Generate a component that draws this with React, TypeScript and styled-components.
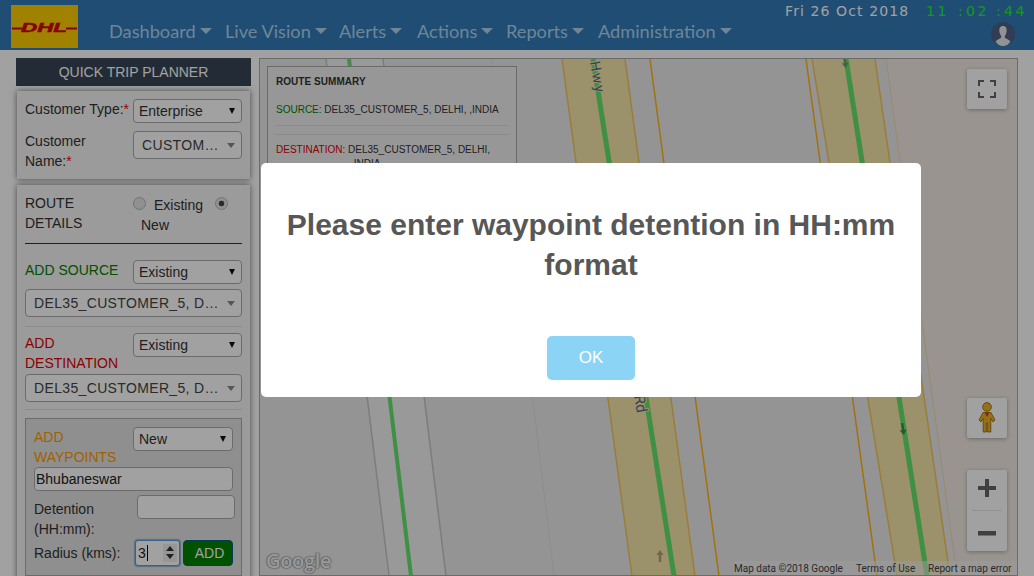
import React from "react";
import styled, { createGlobalStyle } from "styled-components";

const Global = createGlobalStyle`
  html, body { margin: 0; padding: 0; height: 576px; overflow: hidden; background: #fff; }
  body { font-family: "Liberation Sans", Arial, sans-serif; font-size: 14px; color: #333; }
  * { box-sizing: border-box; }
`;

const Page = styled.div`
  position: relative;
  width: 1034px;
  height: 576px;
  overflow: hidden;
`;

const Navbar = styled.header`
  display: flex;
  height: 50px;
  background: #337ab7;
`;

const LogoBox = styled.div`
  width: 67px;
  height: 43px;
  margin: 5px 0 0 11px;
  background: #ffcc00;
`;

const Menu = styled.nav`
  display: flex;
  align-items: center;
  margin: 13px 0 0 31px;
  height: 36px;
`;

const MenuItem = styled.div<{ $w: number }>`
  display: flex;
  align-items: center;
  width: ${(p) => p.$w}px;
  font-family: Lato, sans-serif;
  font-size: 18.2px;
  color: #aed4ee;
  &::after {
    content: "";
    margin-left: 4px;
    border-left: 6px solid transparent;
    border-right: 6px solid transparent;
    border-top: 6px solid #aed4ee;
  }
`;

const DateLine = styled.div`
  position: absolute;
  top: 2px;
  left: 785px;
  display: flex;
  font-family: "DejaVu Sans", sans-serif;
  font-size: 14px;
  line-height: 18px;
  white-space: nowrap;
`;

const DateText = styled.span`
  width: 141px;
  color: #fff;
  letter-spacing: 1.1px;
`;

const ClockPart = styled.span<{ $w: number }>`
  width: ${(p) => p.$w}px;
  color: #20f030;
  letter-spacing: 2.5px;
`;

const AvatarWrap = styled.div`
  position: absolute;
  left: 991px;
  top: 22px;
  width: 24px;
  height: 24px;
`;

const Main = styled.main`
  display: flex;
  padding-top: 8px;
  height: 526px;
  background: #fff;
`;

const Sidebar = styled.aside`
  width: 259px;
  flex: none;
  padding-left: 16px;
`;

const TitleBar = styled.div`
  width: 235px;
  height: 28px;
  background: #384756;
  color: #fff;
  font-size: 14px;
  line-height: 28px;
  text-align: center;
`;

const Card = styled.section<{ $mt: number }>`
  width: 233px;
  margin: ${(p) => p.$mt}px 0 0 1px;
  padding: 8px 8px 8px;
  background: #f5f5f5;
  box-shadow: 0 0 6px rgba(0, 0, 0, 0.55);
`;

const Row = styled.div<{ $mt?: number; $cols?: string }>`
  display: grid;
  grid-template-columns: ${(p) => p.$cols || "108px 109px"};
  margin-top: ${(p) => p.$mt || 0}px;
  align-items: start;
`;

const Label = styled.div<{ $color?: string; $pt?: number }>`
  padding-top: ${(p) => p.$pt || 0}px;
  font-size: 14px;
  line-height: 20px;
  color: ${(p) => p.$color || "#333"};
`;

const Star = styled.span`
  color: #ff0000;
`;

const SelectBox = styled.div`
  position: relative;
  height: 24px;
  padding-left: 5px;
  background: #fff;
  border: 1px solid #aaa;
  border-radius: 4px;
  font-size: 14px;
  line-height: 23px;
  color: #333;
  &::after {
    content: "";
    position: absolute;
    right: 6px;
    top: 8px;
    border-left: 3px solid transparent;
    border-right: 3px solid transparent;
    border-top: 6px solid #111;
  }
`;

const Combo = styled.div<{ $mt?: number }>`
  position: relative;
  height: 28px;
  margin-top: ${(p) => p.$mt || 0}px;
  padding: 0 0 0 8px;
  background: #fff;
  border: 1px solid #aaa;
  border-radius: 4px;
  font-size: 14px;
  line-height: 27px;
  letter-spacing: 0.35px;
  white-space: nowrap;
  color: #444;
  &::after {
    content: "";
    position: absolute;
    right: 6px;
    top: 11px;
    border-left: 4px solid transparent;
    border-right: 4px solid transparent;
    border-top: 5px solid #888;
  }
`;

const RadioGrid = styled.div`
  display: grid;
  grid-template-columns: 21px 61px 20px;
  align-items: start;
  padding-top: 2px;
`;

const Radio = styled.span<{ $on?: boolean }>`
  display: block;
  width: 13px;
  height: 13px;
  margin-top: 2px;
  border: 1px solid #b5b5b5;
  border-radius: 50%;
  background: ${(p) => (p.$on ? "radial-gradient(circle, #444 0 2.5px, #e4e4e4 3.2px)" : "#e4e4e4")};
`;

const NewLabel = styled.div`
  grid-column: 1 / 4;
  margin-left: 8px;
  line-height: 20px;
`;

const RadioText = styled.span`
  line-height: 20px;
`;

const Rule = styled.hr<{ $strong?: boolean; $mt: number; $mb: number }>`
  margin: ${(p) => p.$mt}px 0 ${(p) => p.$mb}px;
  border: 0;
  border-top: 1px solid ${(p) => (p.$strong ? "#333" : "#ddd")};
`;

const WaypointBox = styled.div`
  margin-top: 8px;
  height: 158px;
  padding: 8px;
  background: #e3e3e3;
  border: 1px solid #aaa;
`;

const TextField = styled.div`
  height: 24px;
  padding-left: 1px;
  background: #fff;
  border: 1px solid #aaa;
  border-radius: 4px;
  font-size: 14px;
  line-height: 23px;
  color: #222;
`;

const NumberField = styled.div`
  position: relative;
  display: flex;
  align-items: center;
  width: 45px;
  height: 26px;
  padding-left: 2px;
  background: #fff;
  border: 1px solid #5b9bd5;
  box-shadow: 0 0 1px 1px rgba(91, 155, 213, 0.7);
  border-radius: 3px;
  font-size: 14px;
  color: #222;
`;

const Caret = styled.span`
  width: 1px;
  height: 16px;
  margin-left: 1px;
  background: #000;
`;

const Spinner = styled.span`
  position: absolute;
  right: 2px;
  top: 3px;
  width: 14px;
  height: 18px;
  background: #eee;
  &::before {
    content: "";
    position: absolute;
    left: 3px;
    top: 2px;
    border-left: 4px solid transparent;
    border-right: 4px solid transparent;
    border-bottom: 5px solid #333;
  }
  &::after {
    content: "";
    position: absolute;
    left: 3px;
    top: 10px;
    border-left: 4px solid transparent;
    border-right: 4px solid transparent;
    border-top: 5px solid #333;
  }
`;

const AddButton = styled.button`
  width: 50px;
  height: 26px;
  margin-left: 3px;
  padding: 0 0 0 3px;
  background: #008000;
  border: 1px solid #0a5f8a;
  border-radius: 4px;
  font-family: inherit;
  font-size: 14px;
  color: #fff;
`;

const MapArea = styled.section`
  position: relative;
  width: 759px;
  height: 518px;
  border: 1px solid #aaa;
  background: #ebebeb;
  overflow: hidden;
`;

const MapCanvas = styled.svg`
  position: absolute;
  left: 0;
  top: 0;
  width: 757px;
  height: 516px;
`;

const Summary = styled.div`
  position: absolute;
  left: 7px;
  top: 7px;
  width: 250px;
  height: 200px;
  padding: 8px 8px;
  background: #f0f0f0;
  border: 1px solid #aaa;
  font-size: 10px;
  color: #333;
`;

const SummaryTitle = styled.div`
  font-weight: 700;
  line-height: 14px;
  letter-spacing: 0.05px;
  margin-bottom: 14px;
`;

const SummaryLine = styled.div`
  line-height: 14px;
  margin-left: 0;
`;

const Tone = styled.span<{ $c: string }>`
  color: ${(p) => p.$c};
`;

const Indent = styled.div`
  margin-left: 75px;
  line-height: 14px;
`;

const ThinRule = styled.hr<{ $mt: number; $mb: number }>`
  margin: ${(p) => p.$mt}px 0 ${(p) => p.$mb}px;
  border: 0;
  border-top: 1px solid #ddd;
`;

const MapButton = styled.div<{ $top: number; $h?: number }>`
  position: absolute;
  left: 707px;
  top: ${(p) => p.$top}px;
  width: 40px;
  height: ${(p) => p.$h || 40}px;
  display: flex;
  flex-direction: column;
  align-items: center;
  justify-content: center;
  background: #fff;
  border-radius: 2px;
  box-shadow: 0 1px 4px rgba(0, 0, 0, 0.3);
`;

const ZoomStep = styled.div<{ $up?: boolean }>`
  height: 40px;
  width: 100%;
  display: flex;
  align-items: center;
  justify-content: center;
  padding: ${(p) => (p.$up ? "0 0 4px" : "4px 0 0")};
`;

const ZoomDivider = styled.div`
  width: 30px;
  height: 1px;
  background: #e6e6e6;
`;

const GoogleMark = styled.div`
  position: absolute;
  left: 6px;
  bottom: 1px;
  font-family: "Open Sans", sans-serif;
  font-size: 20px;
  font-weight: 600;
  line-height: 26px;
  letter-spacing: -0.3px;
  color: #f4f4f4;
  text-shadow: 0 0 1px #777, 0 0 1px #777, 0 0 2px #777;
`;

const Attribution = styled.div`
  position: absolute;
  right: 0;
  bottom: 0;
  height: 14px;
  display: flex;
  background: rgba(245, 245, 245, 0.55);
  font-family: Roboto, sans-serif;
  font-size: 10px;
  line-height: 15px;
  color: #444;
  white-space: nowrap;
`;

const AttrItem = styled.span<{ $w: number }>`
  width: ${(p) => p.$w}px;
`;

const Overlay = styled.div`
  position: fixed;
  inset: 0;
  background: rgba(0, 0, 0, 0.37);
`;

const Modal = styled.div`
  position: fixed;
  left: 261px;
  top: 163px;
  width: 660px;
  height: 234px;
  padding: 42px 17px 0;
  background: #fff;
  border-radius: 5px;
  text-align: center;
`;

const ModalTitle = styled.h2`
  margin: 0;
  font-size: 30px;
  font-weight: 700;
  line-height: 40px;
  color: #575757;
`;

const ModalOk = styled.button`
  display: block;
  width: 88px;
  height: 44px;
  margin: 51px auto 0;
  padding: 0;
  border: 0;
  border-radius: 5px;
  background: #8cd4f5;
  font-family: inherit;
  font-size: 17px;
  font-weight: 500;
  color: #fff;
`;

const menu: [string, number][] = [
  ["Dashboard", 116],
  ["Live Vision", 114],
  ["Alerts", 78],
  ["Actions", 89],
  ["Reports", 92],
  ["Administration", 150],
];

const Arrow = ({ x, y, fill, rot = 0 }: { x: number; y: number; fill: string; rot?: number }) => (
  <path d="M0 -6 L3.5 -1 L1.2 -1 L1.2 6 L-1.2 6 L-1.2 -1 L-3.5 -1 Z" fill={fill} transform={`translate(${x} ${y}) rotate(${rot})`} />
);

const Roads = () => (
  <MapCanvas viewBox="260 59 757 516">
    <polygon points="886,59 1018,59 1018,576 957,576" fill="#f2ebe5" />
    <polygon points="326,59 383,59 446,576 388,576" fill="#f2f2f2" />
    <path d="M326 59 L389 576 M383 59 L446 576" stroke="#c4c4c0" strokeWidth="1.5" fill="none" />
    <path d="M349 59 L411 576" stroke="#64e36e" strokeWidth="4" fill="none" />
    <path d="M492 59 L554 576" stroke="#dedede" strokeWidth="1" fill="none" />

    <polygon points="562,59 625,59 695,576 632,576" fill="#f5e6aa" />
    <path d="M562 59 L632 576 M625 59 L695 576" stroke="#f3c75c" strokeWidth="1.5" fill="none" />
    <path d="M593 59 L674 576" stroke="#64e36e" strokeWidth="5" fill="none" />
    <path d="M650 59 L719 576" stroke="#ffb518" strokeWidth="1.5" fill="none" />

    <polygon points="812,59 875,59 950,576 897,576" fill="#f5e6aa" />
    <path d="M812 59 L897 576 M875 59 L950 576" stroke="#f3c75c" strokeWidth="1.5" fill="none" />
    <path d="M846 59 L927 576" stroke="#64e36e" strokeWidth="5" fill="none" />
    <path d="M806 59 L877 576" stroke="#ffb518" strokeWidth="1.5" fill="none" />
    <path d="M886 59 L957 576" stroke="#f3d9b0" strokeWidth="1" fill="none" />

    <text x="0" y="0" transform="translate(590 62) rotate(80)" fontFamily="Roboto, sans-serif" fontSize="14" letterSpacing="2" fill="#4f6a85" stroke="#f5e6aa" strokeWidth="2" paintOrder="stroke">Hwy</text>
    <text x="0" y="0" transform="translate(634 396) rotate(80)" fontFamily="Roboto, sans-serif" fontSize="15" fill="#4f6a85" stroke="#f5e6aa" strokeWidth="2" paintOrder="stroke">Rd</text>
    <Arrow x={660} y={556} fill="#b0a078" />
    <Arrow x={903} y={429} fill="#3f9048" rot={172} />
    <Arrow x={845} y={62} fill="#66a070" rot={172} />
  </MapCanvas>
);

const FullscreenIcon = () => (
  <svg width="18" height="18" viewBox="0 0 18 18">
    <path d="M1 6 V1 H6 M12 1 H17 V6 M17 12 V17 H12 M6 17 H1 V12" fill="none" stroke="#666" strokeWidth="2" />
  </svg>
);

const Pegman = () => (
  <svg width="18" height="32" viewBox="0 0 18 32">
    <g stroke="#7a5a10" strokeWidth="0.7" fill="#f0b020">
      <circle cx="9" cy="5" r="4.4" />
      <path d="M5 10.5 H13 L17 18 L15 20 L12.8 16.5 V30 H9.6 V21 H8.4 V30 H5.2 V16.5 L3 20 L1 18 Z" />
    </g>
    <path d="M6.5 10.5 L9 15 L11.5 10.5 Z" fill="#c94a1a" />
  </svg>
);

const PlusIcon = () => (
  <svg width="18" height="18" viewBox="0 0 18 18">
    <path d="M0 7 H7 V0 H11 V7 H18 V11 H11 V18 H7 V11 H0 Z" fill="#666" />
  </svg>
);

const MinusIcon = () => (
  <svg width="18" height="5" viewBox="0 0 18 5">
    <rect width="18" height="4.5" fill="#666" />
  </svg>
);

const DhlLogo = () => (
  <svg width="67" height="43" viewBox="0 0 67 43">
    <path d="M1 23.5 H11 M55 23.5 H66" stroke="#d40511" strokeWidth="2" />
    <text x="10" y="26.5" textLength="46" lengthAdjust="spacingAndGlyphs" fontFamily="Liberation Sans, sans-serif" fontStyle="italic" fontWeight="700" fontSize="12" fill="#d40511" stroke="#d40511" strokeWidth="0.5">DHL</text>
  </svg>
);

const AvatarIcon = () => (
  <svg width="24" height="24" viewBox="0 0 24 24">
    <circle cx="12" cy="12" r="12" fill="#4d6185" />
    <path d="M12 4 C9 4 8 6.5 8.4 9.5 C8.7 11.5 9.5 13 10.2 14 V15.5 C9 17 6 17.5 4.5 19.5 C6.5 22.5 9 24 12 24 C15 24 17.5 22.5 19.5 19.5 C18 17.5 15 17 13.8 15.5 V14 C14.5 13 15.3 11.5 15.6 9.5 C16 6.5 15 4 12 4 Z" fill="#e8e8e8" />
  </svg>
);

export default function App() {
  return (
    <Page>
      <Global />
      <Navbar>
        <LogoBox>
          <DhlLogo />
        </LogoBox>
        <Menu>
          {menu.map(([label, w]) => (
            <MenuItem key={label} $w={w}>
              {label}
            </MenuItem>
          ))}
        </Menu>
      </Navbar>
      <DateLine>
        <DateText>Fri 26 Oct 2018</DateText>
        <ClockPart $w={32}>11</ClockPart>
        <ClockPart $w={8}>:</ClockPart>
        <ClockPart $w={30}>02</ClockPart>
        <ClockPart $w={8}>:</ClockPart>
        <ClockPart $w={24}>44</ClockPart>
      </DateLine>
      <AvatarWrap>
        <AvatarIcon />
      </AvatarWrap>
      <Main>
        <Sidebar>
          <TitleBar>QUICK TRIP PLANNER</TitleBar>
          <Card $mt={5}>
            <Row>
              <Label>
                Customer Type:<Star>*</Star>
              </Label>
              <SelectBox>Enterprise</SelectBox>
            </Row>
            <Row $mt={8}>
              <Label>
                Customer
                <br />
                Name:<Star>*</Star>
              </Label>
              <Combo>CUSTOM…</Combo>
            </Row>
          </Card>
          <Card $mt={6}>
            <Row>
              <Label>
                ROUTE
                <br />
                DETAILS
              </Label>
              <RadioGrid>
                <Radio />
                <RadioText>Existing</RadioText>
                <Radio $on />
                <NewLabel>New</NewLabel>
              </RadioGrid>
            </Row>
            <Rule $strong $mt={8} $mb={16} />
            <Row>
              <Label>
                <Tone $c="#008000">ADD SOURCE</Tone>
              </Label>
              <SelectBox>Existing</SelectBox>
            </Row>
            <Combo $mt={5}>DEL35_CUSTOMER_5, D…</Combo>
            <Rule $mt={9} $mb={6} />
            <Row>
              <Label $color="#e00000">
                ADD
                <br />
                DESTINATION
              </Label>
              <SelectBox>Existing</SelectBox>
            </Row>
            <Combo $mt={1}>DEL35_CUSTOMER_5, D…</Combo>
            <Rule $mt={7} $mb={0} />
            <WaypointBox>
              <Row $cols="99px 100px">
                <Label $color="#ff9900">
                  ADD
                  <br />
                  WAYPOINTS
                </Label>
                <SelectBox>New</SelectBox>
              </Row>
              <TextField>Bhubaneswar</TextField>
              <Row $mt={4} $cols="103px 98px">
                <Label $pt={4}>
                  Detention
                  <br />
                  (HH:mm):
                </Label>
                <TextField />
              </Row>
              <Row $mt={1} $cols="101px 45px 53px">
                <Label $pt={3}>Radius (kms):</Label>
                <NumberField>
                  3
                  <Caret />
                  <Spinner />
                </NumberField>
                <AddButton>ADD</AddButton>
              </Row>
            </WaypointBox>
          </Card>
        </Sidebar>
        <MapArea>
          <Roads />
          <Summary>
            <SummaryTitle>ROUTE SUMMARY</SummaryTitle>
            <SummaryLine>
              <Tone $c="#008000">SOURCE:</Tone> DEL35_CUSTOMER_5, DELHI, ,INDIA
            </SummaryLine>
            <ThinRule $mt={8} $mb={8} />
            <ThinRule $mt={0} $mb={8} />
            <SummaryLine>
              <Tone $c="#e00000">DESTINATION:</Tone> DEL35_CUSTOMER_5, DELHI,
            </SummaryLine>
            <Indent>,INDIA</Indent>
          </Summary>
          <MapButton $top={10}>
            <FullscreenIcon />
          </MapButton>
          <MapButton $top={339}>
            <Pegman />
          </MapButton>
          <MapButton $top={411} $h={81}>
            <ZoomStep $up>
              <PlusIcon />
            </ZoomStep>
            <ZoomDivider />
            <ZoomStep>
              <MinusIcon />
            </ZoomStep>
          </MapButton>
          <GoogleMark>Google</GoogleMark>
          <Attribution>
            <AttrItem $w={122}>Map data ©2018 Google</AttrItem>
            <AttrItem $w={72}>Terms of Use</AttrItem>
            <AttrItem $w={89}>Report a map error</AttrItem>
          </Attribution>
        </MapArea>
      </Main>
      <Overlay />
      <Modal>
        <ModalTitle>Please enter waypoint detention in HH:mm format</ModalTitle>
        <ModalOk>OK</ModalOk>
      </Modal>
    </Page>
  );
}
